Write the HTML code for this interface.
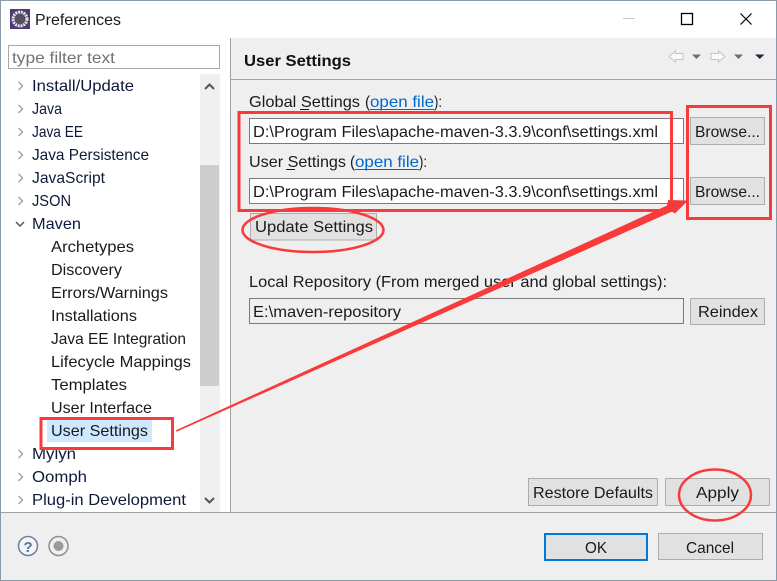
<!DOCTYPE html>
<html><head><meta charset="utf-8"><style>
html,body{margin:0;padding:0;background:#fff;width:777px;height:581px;overflow:hidden}
svg{display:block}
text{font-family:"Liberation Sans","Noto Sans CJK SC",sans-serif;font-size:16px;fill:#1a1a1a}
.t{fill:#0f1a3a}
.l{fill:#0066cc}
</style></head><body>
<svg width="777" height="581" viewBox="0 0 777 581" xmlns="http://www.w3.org/2000/svg">
<rect width="777" height="581" fill="#fff"/>
<rect x="0" y="38" width="777" height="543" fill="#efefef"/>
<rect x="1" y="38" width="229" height="474" fill="#fff"/>
<rect x="230" y="38" width="1" height="474" fill="#a0a0a0"/>
<rect x="231" y="79" width="546" height="1" fill="#a0a5a8"/>
<rect x="0" y="512" width="777" height="1" fill="#a0a0a0"/>
<!-- title -->
<rect x="10" y="9" width="20" height="20" fill="#4d3a78"/>
<circle cx="20" cy="19" r="7" fill="#555266" stroke="#e2e2e2" stroke-width="3" stroke-dasharray="2 .8"/>
<text x="35" y="25" textLength="86" lengthAdjust="spacingAndGlyphs">Preferences</text>
<rect x="623" y="18" width="12" height="1" fill="#c8c8c8"/>
<rect x="681.5" y="13.500" width="11" height="11" fill="none" stroke="#000" stroke-width="1.300"/>
<path d="M740.500 13.500L751.500 24.500M751.500 13.500L740.500 24.500" stroke="#000" stroke-width="1.200" fill="none"/>
<!-- header icons -->
<path d="M669 56.500L675.500 51V53.500H683V59.500H675.500V62Z" fill="#fafafa" stroke="#c4c4c4"/>
<path d="M692 54.500H701L696.500 59Z" fill="#6e6e6e"/>
<path d="M725 56.500L718.500 51V53.500H711V59.500H718.500V62Z" fill="#fafafa" stroke="#c4c4c4"/>
<path d="M734 54.500H743L738.500 59Z" fill="#6e6e6e"/>
<path d="M755 54.500H764.500L759.750 59Z" fill="#2b2140"/>
<!-- filter -->
<rect x="8.500" y="45.500" width="211" height="23" fill="#fff" stroke="#a8a8a8"/>
<text x="12" y="63" textLength="103" lengthAdjust="spacingAndGlyphs" style="fill:#727272">type filter text</text>
<!-- scrollbar -->
<rect x="200" y="74" width="20" height="438" fill="#f0f0f0"/>
<rect x="200" y="165" width="19" height="221" fill="#cdcdcd"/>
<path d="M205 89L209.500 84.500L214 89" fill="none" stroke="#555" stroke-width="2"/>
<path d="M205 498L209.500 502.500L214 498" fill="none" stroke="#555" stroke-width="2"/>
<!-- tree -->
<rect x="47" y="420" width="105" height="22" fill="#cde8ff"/>
<g fill="none" stroke="#a6a6a6" stroke-width="1.500">
<path d="M18.500 82L22.500 86L18.500 90"/><path d="M18.500 105L22.500 109L18.500 113"/><path d="M18.500 128L22.500 132L18.500 136"/><path d="M18.500 151L22.500 155L18.500 159"/><path d="M18.500 174L22.500 178L18.500 182"/><path d="M18.500 197L22.500 201L18.500 205"/>
<path d="M18.500 450L22.500 454L18.500 458"/><path d="M18.500 473L22.500 477L18.500 481"/><path d="M18.500 496L22.500 500L18.500 504"/>
</g>
<path d="M16 222L20 226L24 222" fill="none" stroke="#555" stroke-width="1.500"/>
<g class="tree">
<text class="t" x="32" y="91" textLength="102" lengthAdjust="spacingAndGlyphs">Install/Update</text>
<text class="t" x="32" y="114" textLength="30" lengthAdjust="spacingAndGlyphs">Java</text>
<text class="t" x="32" y="137" textLength="51" lengthAdjust="spacingAndGlyphs">Java EE</text>
<text class="t" x="32" y="160" textLength="117" lengthAdjust="spacingAndGlyphs">Java Persistence</text>
<text class="t" x="32" y="183" textLength="73" lengthAdjust="spacingAndGlyphs">JavaScript</text>
<text class="t" x="32" y="206" textLength="39" lengthAdjust="spacingAndGlyphs">JSON</text>
<text class="t" x="32" y="229" textLength="49" lengthAdjust="spacingAndGlyphs">Maven</text>
<text x="51" y="252" textLength="83" lengthAdjust="spacingAndGlyphs">Archetypes</text>
<text x="51" y="275" textLength="71" lengthAdjust="spacingAndGlyphs">Discovery</text>
<text x="51" y="298" textLength="117" lengthAdjust="spacingAndGlyphs">Errors/Warnings</text>
<text x="51" y="321" textLength="86" lengthAdjust="spacingAndGlyphs">Installations</text>
<text x="51" y="344" textLength="135" lengthAdjust="spacingAndGlyphs">Java EE Integration</text>
<text x="51" y="367" textLength="140" lengthAdjust="spacingAndGlyphs">Lifecycle Mappings</text>
<text x="51" y="390" textLength="76" lengthAdjust="spacingAndGlyphs">Templates</text>
<text x="51" y="413" textLength="101" lengthAdjust="spacingAndGlyphs">User Interface</text>
<text x="51" y="436" textLength="97" lengthAdjust="spacingAndGlyphs">User Settings</text>
<text class="t" x="32" y="459" textLength="44" lengthAdjust="spacingAndGlyphs">Mylyn</text>
<text class="t" x="32" y="482" textLength="55" lengthAdjust="spacingAndGlyphs">Oomph</text>
<text class="t" x="32" y="505" textLength="154" lengthAdjust="spacingAndGlyphs">Plug-in Development</text>
</g>
<!-- right -->
<text x="244" y="66" textLength="107" lengthAdjust="spacingAndGlyphs" style="font-weight:bold;fill:#111">User Settings</text>
<text x="249" y="107" textLength="111" lengthAdjust="spacingAndGlyphs">Global Settings</text>
<rect x="300" y="109" width="9" height="1" fill="#1a1a1a"/>
<text x="365" y="107" textLength="5" lengthAdjust="spacingAndGlyphs">(</text>
<text class="l" x="370" y="107" textLength="64" lengthAdjust="spacingAndGlyphs">open file</text>
<rect x="370" y="109" width="64" height="1" fill="#0066cc"/>
<text x="434" y="107" textLength="8" lengthAdjust="spacingAndGlyphs">):</text>
<rect x="249.500" y="118.500" width="434" height="25" fill="#fff" stroke="#7a7a7a"/>
<text x="253" y="137" textLength="405" lengthAdjust="spacingAndGlyphs">D:\Program Files\apache-maven-3.3.9\conf\settings.xml</text>
<text x="249" y="167" textLength="97" lengthAdjust="spacingAndGlyphs">User Settings</text>
<rect x="286" y="169" width="9" height="1" fill="#1a1a1a"/>
<text x="350" y="167" textLength="5" lengthAdjust="spacingAndGlyphs">(</text>
<text class="l" x="355" y="167" textLength="64" lengthAdjust="spacingAndGlyphs">open file</text>
<rect x="355" y="169" width="64" height="1" fill="#0066cc"/>
<text x="419" y="167" textLength="8" lengthAdjust="spacingAndGlyphs">):</text>
<rect x="249.500" y="178.500" width="434" height="25" fill="#fff" stroke="#7a7a7a"/>
<text x="253" y="197" textLength="405" lengthAdjust="spacingAndGlyphs">D:\Program Files\apache-maven-3.3.9\conf\settings.xml</text>
<g fill="#e1e1e1" stroke="#adadad">
<rect x="690.500" y="117.500" width="74" height="27"/>
<rect x="690.500" y="177.500" width="74" height="27"/>
<rect x="250.500" y="213.500" width="126" height="26.500"/>
<rect x="690.500" y="298.500" width="74" height="26"/>
<rect x="528.500" y="478.500" width="129" height="27"/>
<rect x="665.500" y="478.500" width="104" height="27"/>
<rect x="658.500" y="533.500" width="104" height="26"/>
</g>
<rect x="545" y="534" width="102" height="26" fill="#e1e1e1" stroke="#0078d7" stroke-width="2"/>
<text x="695" y="137" textLength="65" lengthAdjust="spacingAndGlyphs">Browse...</text>
<text x="695" y="197" textLength="65" lengthAdjust="spacingAndGlyphs">Browse...</text>
<text x="255" y="232" textLength="118" lengthAdjust="spacingAndGlyphs">Update Settings</text>
<text x="249" y="287" textLength="418" lengthAdjust="spacingAndGlyphs">Local Repository (From merged user and global settings):</text>
<rect x="249.500" y="298.500" width="434" height="25" fill="#efefef" stroke="#7a7a7a"/>
<text x="253" y="317" textLength="148" lengthAdjust="spacingAndGlyphs">E:\maven-repository</text>
<text x="698" y="317" textLength="60" lengthAdjust="spacingAndGlyphs">Reindex</text>
<text x="533" y="498" textLength="120" lengthAdjust="spacingAndGlyphs">Restore Defaults</text>
<text x="696" y="498" textLength="43" lengthAdjust="spacingAndGlyphs">Apply</text>
<text x="585" y="553" textLength="22" lengthAdjust="spacingAndGlyphs">OK</text>
<text x="686" y="553" textLength="48" lengthAdjust="spacingAndGlyphs">Cancel</text>
<!-- bottom icons -->
<circle cx="28" cy="546" r="9.500" fill="#f3f5f8" stroke="#6f7f9a" stroke-width="1.500"/>
<text x="23.500" y="552" style="font-size:15px;font-weight:bold;fill:#5a6f95">?</text>
<circle cx="58.500" cy="546" r="9.500" fill="#f0f0f0" stroke="#8a8f98" stroke-width="1.500"/>
<circle cx="58.500" cy="546" r="5" fill="#9a9a9a"/>
<!-- annotations -->
<g fill="none" stroke="#f83a3a">
<rect x="239" y="112.500" width="432.500" height="98" stroke-width="3"/>
<rect x="687.500" y="106.500" width="83" height="112" stroke-width="3"/>
<rect x="41" y="418.500" width="131.500" height="30" stroke-width="3"/>
<ellipse cx="313" cy="230" rx="70.500" ry="22" stroke-width="2.500"/>
<ellipse cx="715" cy="495" rx="36" ry="25.500" stroke-width="2.500"/>
</g>
<path d="M176 430.300L667 205.500L668 200L688 200.500L675 213.500L672 211.500L176.500 431.800Z" fill="#f83a3a"/>
<!-- window border -->
<rect x="0" y="0" width="777" height="1" fill="#8b9aa8"/>
<rect x="0" y="0" width="1" height="581" fill="#8b9aa8"/>
<rect x="0" y="580" width="777" height="1" fill="#8b9aa8"/>
<rect x="776" y="0" width="1" height="581" fill="#8b9aa8"/>
</svg>
</body></html>
